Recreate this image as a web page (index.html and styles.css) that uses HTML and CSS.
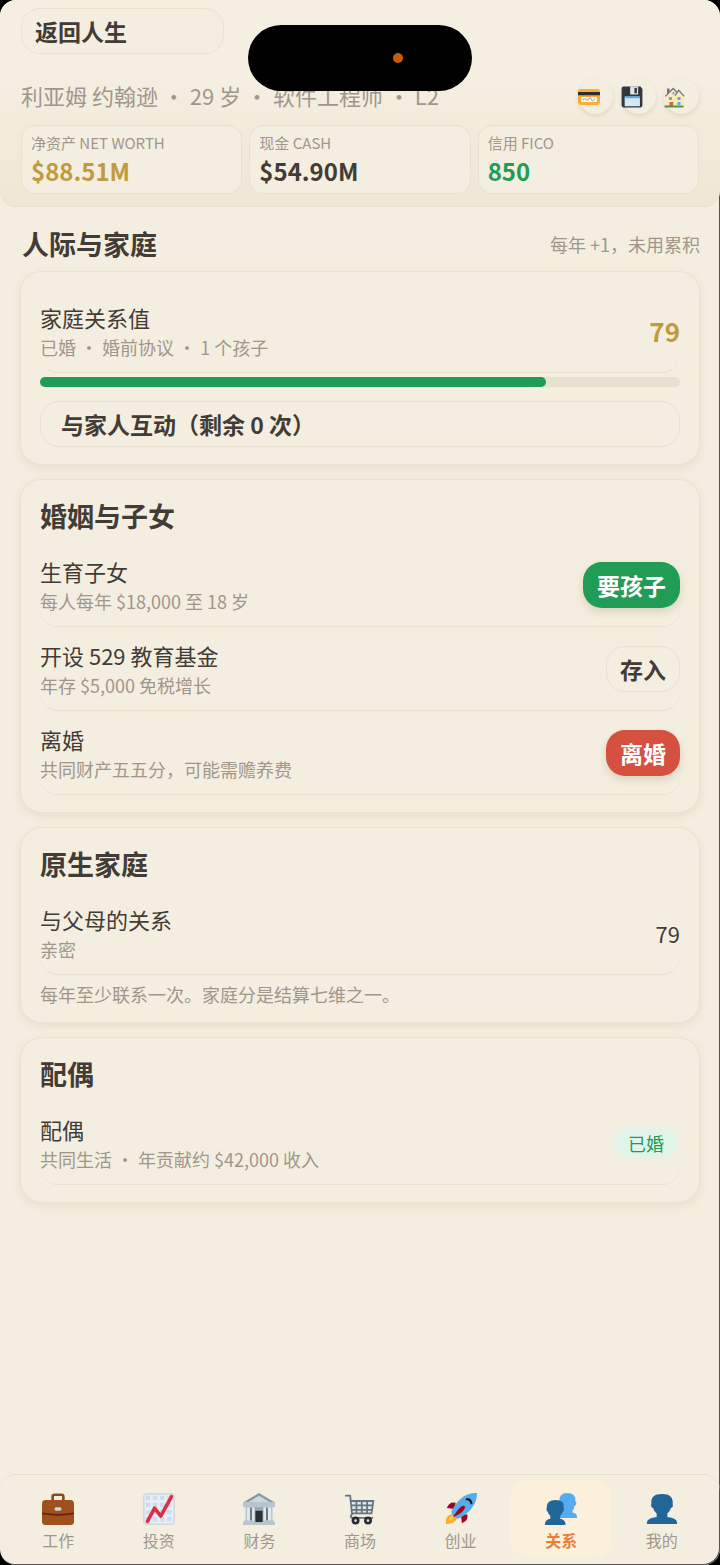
FILE: index.html
```html
<!DOCTYPE html>
<html lang="zh-CN">
<head>
    <meta charset="UTF-8">
    <meta name="viewport" content="width=device-width, initial-scale=1.0">
    <title>人际与家庭</title>
    <link rel="stylesheet" href="styles.css">
</head>
<body>
    <div class="screen">
        <div class="island"><span class="island-dot"></span></div>

        <header class="header">
            <button class="btn back-button">返回人生</button>
            <div class="profile">
                <p class="profile-text">利亚姆 约翰逊 ・ 29 岁 ・ 软件工程师 ・ L2</p>
                <div class="tools">
                    <button class="tool-button" aria-label="银行卡">
                        <svg viewBox="0 0 36 36">
                            <rect y="5" width="36" height="26" rx="4" fill="#ffac33"/>
                            <path d="M0 10h36v5H0z" fill="#292f33"/>
                            <rect x="5" y="18" width="26" height="8" rx="1" fill="#f4f7f9"/>
                            <path d="M8 23q3-4 5-1t5-1 4 1 6-1" fill="none" stroke="#8899a6" stroke-width="1.5"/>
                        </svg>
                    </button>
                    <button class="tool-button" aria-label="存档">
                        <svg viewBox="0 0 36 36">
                            <path d="M4 1h28l3 4v27q0 3-3 3H4q-3 0-3-3V4q0-3 3-3z" fill="#31373d"/>
                            <path d="M15 1h13v12q0 1-1 1H16q-1 0-1-1z" fill="#e1e8ed"/>
                            <rect x="22" y="3" width="4" height="9" fill="#31373d"/>
                            <path d="M6 18q0-1 1-1h23q1 0 1 1v15H6z" fill="#d4e7f5"/>
                            <path d="M6 17h25v3H6z" fill="#55acee"/>
                        </svg>
                    </button>
                    <button class="tool-button" aria-label="住宅">
                        <svg viewBox="0 0 36 36">
                            <path d="M5 4h4v9H5z" fill="#66757f"/>
                            <path d="M4 16L14 5l6 3 5-2 7 9v18H4z" fill="#ffe8b6"/>
                            <path d="M2 17L15 4l7 7M18 16l6-9 9 10" fill="none" stroke="#66757f" stroke-width="2"/>
                            <path d="M8 18h5v5H8zM22 18h5v5h-5zM22 26h5v5h-5zM14 10h3v4h-3z" fill="#55acee"/>
                            <path d="M9 26h6v8H9z" fill="#c1694f"/>
                            <path d="M1 32h31v3H1z" fill="#5c913b"/>
                        </svg>
                    </button>
                </div>
            </div>
            <div class="stats">
                <div class="stat">
                    <span class="stat-label">净资产 NET WORTH</span>
                    <strong class="stat-value gold">$88.51M</strong>
                </div>
                <div class="stat">
                    <span class="stat-label">现金 CASH</span>
                    <strong class="stat-value">$54.90M</strong>
                </div>
                <div class="stat">
                    <span class="stat-label">信用 FICO</span>
                    <strong class="stat-value green">850</strong>
                </div>
            </div>
        </header>

        <main class="content">
            <div class="section-head">
                <h1 class="title">人际与家庭</h1>
                <span class="sub">每年 +1，未用累积</span>
            </div>

            <section class="card">
                <div class="row">
                    <div class="row-text">
                        <p class="name">家庭关系值</p>
                        <p class="sub">已婚 ・ 婚前协议 ・ 1 个孩子</p>
                    </div>
                    <strong class="score gold">79</strong>
                </div>
                <div class="bar"><div class="bar-fill" style="width: 79%"></div></div>
                <button class="btn wide-button">与家人互动（剩余 0 次）</button>
            </section>

            <section class="card">
                <h2 class="title card-title">婚姻与子女</h2>
                <div class="row">
                    <div class="row-text">
                        <p class="name">生育子女</p>
                        <p class="sub">每人每年 $18,000 至 18 岁</p>
                    </div>
                    <button class="btn btn-green">要孩子</button>
                </div>
                <div class="row">
                    <div class="row-text">
                        <p class="name">开设 529 教育基金</p>
                        <p class="sub">年存 $5,000 免税增长</p>
                    </div>
                    <button class="btn">存入</button>
                </div>
                <div class="row">
                    <div class="row-text">
                        <p class="name">离婚</p>
                        <p class="sub">共同财产五五分，可能需赡养费</p>
                    </div>
                    <button class="btn btn-red">离婚</button>
                </div>
            </section>

            <section class="card">
                <h2 class="title card-title">原生家庭</h2>
                <div class="row">
                    <div class="row-text">
                        <p class="name">与父母的关系</p>
                        <p class="sub">亲密</p>
                    </div>
                    <span class="name">79</span>
                </div>
                <p class="note">每年至少联系一次。家庭分是结算七维之一。</p>
            </section>

            <section class="card">
                <h2 class="title card-title">配偶</h2>
                <div class="row">
                    <div class="row-text">
                        <p class="name">配偶</p>
                        <p class="sub">共同生活 ・ 年贡献约 $42,000 收入</p>
                    </div>
                    <span class="tag">已婚</span>
                </div>
            </section>
        </main>

        <nav class="tabbar">
            <a class="tab" href="#work">
                <svg viewBox="0 0 36 36">
                    <path d="M12 9V4q0-2 2-2h8q2 0 2 2v5" fill="none" stroke="#8a4b20" stroke-width="3"/>
                    <rect y="8" width="36" height="28" rx="4" fill="#a0501c"/>
                    <path d="M0 22q18 3 36 0v2q-18 3-36 0z" fill="#662113"/>
                    <rect x="14" y="16" width="8" height="4" rx="2" fill="#ccd6dd"/>
                </svg>
                工作
            </a>
            <a class="tab" href="#invest">
                <svg viewBox="0 0 36 36">
                    <rect x="1" y="1" width="34" height="34" rx="2" fill="#e8eef5" stroke="#b8c8d4"/>
                    <path d="M3 3h5v5H3zM11 3h5v5h-5zM19 3h5v5h-5zM27 3h5v5h-5zM3 11h5v5H3zM11 11h5v5h-5zM19 11h5v5h-5zM27 11h5v5h-5zM3 19h5v5H3zM11 19h5v5h-5zM19 19h5v5h-5zM27 19h5v5h-5zM3 27h5v5H3zM11 27h5v5h-5zM19 27h5v5h-5zM27 27h5v5h-5z" fill="#cedcec"/>
                    <path d="M5 32l8-15 7 9L32 4" fill="none" stroke="#dd2e44" stroke-width="4" stroke-linecap="round" stroke-linejoin="round"/>
                </svg>
                投资
            </a>
            <a class="tab" href="#finance">
                <svg viewBox="0 0 36 36">
                    <path d="M3 14h30v19H3z" fill="#9aaab4"/>
                    <path d="M4 16h4v16H4zM10 16h3v16h-3zM23 16h3v16h-3zM28 16h4v16h-4z" fill="#e1e8ed"/>
                    <path d="M8 17h2v14H8zM26 17h2v14h-2z" fill="#66757f"/>
                    <path d="M18 0l17 10H1z" fill="#8899a6"/>
                    <path d="M18 3l12 7H6z" fill="#ccd6dd"/>
                    <path d="M0 10h36v6H0z" fill="#b8c5ce"/>
                    <path d="M14 20h8v13h-8z" fill="#292f33"/>
                    <path d="M1 31h12v2H1zM23 31h12v2H23zM0 33h36v3H0z" fill="#b8c5ce"/>
                </svg>
                财务
            </a>
            <a class="tab" href="#shop">
                <svg viewBox="0 0 36 36">
                    <path d="M9 9h24l-2 14H9z" fill="#dde7ed"/>
                    <path d="M8 9h25l-2 14H9M8 14h24M9 19h23M14 9v14M20 9v14M26 9v14" fill="none" stroke="#66757f" stroke-width="2"/>
                    <path d="M2 3h5l2 21q-3 3 0 4h23" fill="none" stroke="#66757f" stroke-width="2" stroke-linecap="round"/>
                    <circle cx="13" cy="31" r="3" fill="#dde7ed" stroke="#292f33" stroke-width="3"/>
                    <circle cx="27" cy="31" r="3" fill="#dde7ed" stroke="#292f33" stroke-width="3"/>
                </svg>
                商场
            </a>
            <a class="tab" href="#startup">
                <svg viewBox="0 0 36 36">
                    <path d="M12 11q-7-2-10 6l9 1zM25 24q2 7-6 10l-1-9z" fill="#a0041e"/>
                    <path d="M1 35q-1-9 6-11 6-1 7 4-3 7-13 7z" fill="#ffac33"/>
                    <path d="M4 31q1-5 5-5 1 5-5 5z" fill="#ffcc4d"/>
                    <path d="M36 0Q18-1 7 21q1 6 8 8Q36 18 36 0z" fill="#55acee"/>
                    <path d="M24 6q6-1 7 6l-2 1q-1-5-6-5z" fill="#14171a"/>
                    <path d="M21 14q-5 1-12 13 10-3 14-11z" fill="#a0041e"/>
                </svg>
                创业
            </a>
            <a class="tab active" href="#relations">
                <svg viewBox="0 0 36 36">
                    <path d="M15 28v-5l4-4v-4q-2-1-3-4Q15 0 25 0t9 9q2 1 1 4l-2 2q0 3-2 5v2q5 1 5 5v1z" fill="#55acee"/>
                    <path d="M0 36v-2q1-4 6-5v-3q-2-2-3-5-2-1-1-5 0-8 10-8t9 8q1 4-1 5-1 3-3 5v3q5 1 6 5v2z" fill="#226699"/>
                </svg>
                关系
            </a>
            <a class="tab" href="#mine">
                <svg viewBox="0 0 36 36">
                    <path d="M1 35v-2q1-5 11-6v-4q-3-2-4-6-3-1-2-5Q5 1 18 1t12 11q1 4-2 5-1 4-4 6v4q10 1 11 6v2z" fill="#226699"/>
                </svg>
                我的
            </a>
        </nav>
    </div>
</body>
</html>
```

FILE: styles.css
```css
* {
    margin: 0;
    padding: 0;
    box-sizing: border-box;
}

body {
    font-family: "Noto Sans CJK SC", sans-serif;
    background-color: #000;
    color: #433c35;
}

button {
    font-family: inherit;
    cursor: pointer;
}

.screen {
    position: relative;
    display: flex;
    flex-direction: column;
    min-height: 100vh;
    background-color: #f4eee0;
    border-radius: 16px;
    box-shadow: inset -1px -1px 0 #57534c;
    overflow: hidden;
}

.island {
    position: absolute;
    top: 25px;
    left: 50%;
    width: 224px;
    height: 66px;
    border-radius: 33px;
    background-color: #000;
    transform: translateX(-50%);
    z-index: 10;
}

.island-dot {
    position: absolute;
    top: 28px;
    right: 69px;
    width: 10px;
    height: 10px;
    border-radius: 50%;
    background-color: #c95a08;
}

/* Header */
.header {
    padding: 8px 21px 12px;
    background: linear-gradient(#f5efe2 35%, #eee7d5);
    border-bottom: 1px solid #e8dfcd;
    border-radius: 0 0 16px 16px;
}

.btn {
    height: 46px;
    padding: 0 13px;
    border: 1px solid #eae1d1;
    border-radius: 19px;
    background-color: #f4eee0;
    color: #433c35;
    font-size: 23px;
    font-weight: 700;
    line-height: 42px;
    text-align: left;
    white-space: nowrap;
}

.btn-green,
.btn-red {
    border-color: transparent;
    color: #fff;
    box-shadow: 0 4px 8px rgba(120, 100, 60, 0.2);
}

.btn-green {
    background: #219c56 border-box;
}

.btn-red {
    background: #d65040 border-box;
}

.back-button {
    display: block;
    width: 30%;
    margin-bottom: 25px;
}

.profile {
    display: flex;
    justify-content: space-between;
    align-items: flex-start;
}

.profile-text {
    font-size: 22px;
    line-height: 32px;
    color: #a0978a;
    white-space: nowrap;
}

.tools {
    display: flex;
    gap: 8px;
}

.tool-button {
    display: flex;
    align-items: center;
    width: 35px;
    height: 35px;
    border: 0;
    border-radius: 50%;
    background-color: #f4eee0;
    box-shadow: 0 2px 4px rgba(120, 100, 60, 0.16);
}

.tool-button svg {
    width: 22px;
    height: 22px;
}

.stats {
    display: grid;
    grid-template-columns: repeat(3, 1fr);
    gap: 7px;
    margin-top: 11px;
}

.stat {
    display: flex;
    flex-direction: column;
    padding: 5px 9px 6px;
    border: 1px solid #e9e0cf;
    border-radius: 14px;
    background-color: #f4eee0;
}

.stat-label {
    font-size: 15px;
    line-height: 24px;
    color: #a0978a;
}

.stat-value {
    font-size: 24px;
    line-height: 32px;
}

.gold {
    color: #c09a3d;
}

.green {
    color: #219c56;
}

/* Content */
.content {
    display: flex;
    flex-direction: column;
    gap: 14px;
    padding: 18px 20px 24px;
}

.section-head {
    display: flex;
    justify-content: space-between;
    align-items: center;
    margin-bottom: -6px;
    padding-left: 2px;
}

.title {
    font-size: 27px;
    font-weight: 700;
    line-height: 38px;
}

.card-title {
    margin-bottom: 8px;
}

.card {
    padding: 17px 19px;
    border: 1px solid #ebe2d2;
    border-radius: 22px;
    background-color: #f4eee0;
    box-shadow: 0 3px 8px rgba(120, 100, 60, 0.1);
}

.row {
    display: flex;
    justify-content: space-between;
    align-items: center;
    height: 84px;
    border-bottom: 1px solid #eae1d1;
    border-radius: 18px;
}

.row-text {
    padding-bottom: 2px;
}

.name {
    font-size: 22px;
    line-height: 34px;
}

.sub,
.note {
    font-size: 18px;
    line-height: 26px;
    color: #a0978a;
}

.note {
    margin-top: 8px;
    line-height: 22px;
}

.score {
    font-size: 26px;
}

.bar {
    height: 10px;
    margin-top: 4px;
    border-radius: 5px;
    background-color: #e9e1d0;
}

.bar-fill {
    height: 100%;
    border-radius: 5px;
    background-color: #219c56;
}

.wide-button {
    display: block;
    width: 100%;
    margin-top: 14px;
    padding: 0 20px;
}

.tag {
    padding: 4px 16px;
    border-radius: 17px;
    background-color: #e0f4ea;
    box-shadow: inset 0 0 5px 2px #f4eee0;
    color: #219c56;
    font-size: 18px;
    line-height: 26px;
}

/* Bottom tabs */
.tabbar {
    display: grid;
    grid-template-columns: repeat(7, 1fr);
    margin-top: auto;
    padding: 5px 8px 8px;
    border-top: 1px solid #e8dfcf;
    border-radius: 16px;
}

.tab {
    display: flex;
    flex-direction: column;
    align-items: center;
    gap: 3px;
    padding: 13px 0 5px;
    border-radius: 16px;
    color: #a0978a;
    font-size: 16px;
    line-height: 24px;
    text-decoration: none;
}

.tab svg {
    width: 32px;
    height: 32px;
}

.tab.active {
    background-color: #faf0dc;
    color: #e8803a;
    font-weight: 700;
}
```
